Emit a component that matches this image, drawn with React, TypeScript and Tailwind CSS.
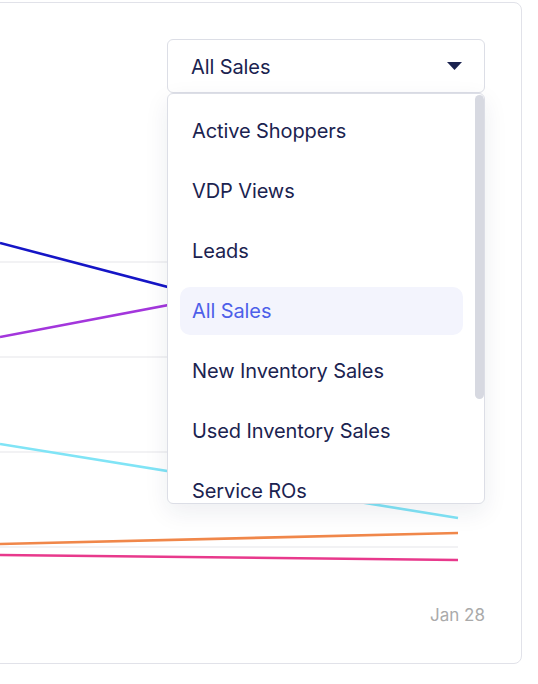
import React from 'react';

const options = [
  'Active Shoppers',
  'VDP Views',
  'Leads',
  'All Sales',
  'New Inventory Sales',
  'Used Inventory Sales',
  'Service ROs',
  'Parts Sales',
];

const series = [
  { color: '#1515c6', y1: 243, y2: 363 },
  { color: '#a336dc', y1: 337, y2: 250 },
  { color: '#80e4f6', y1: 444, y2: 518 },
  { color: '#f0874a', y1: 544, y2: 533 },
  { color: '#e8398c', y1: 555, y2: 560 },
];

const gridY = [262, 357, 452, 547];

export default function App() {
  const selected = 'All Sales';
  return (
    <div className="w-[538px] h-[684px] bg-white overflow-hidden pt-[2px]" style={{ fontFamily: 'Inter, "Noto Sans", sans-serif' }}>
      <div className="relative ml-[-10px] w-[532px] h-[662px] border border-[#e1e2e9] rounded-lg flex flex-col">
        <div className="flex justify-end pt-[36px] pr-[36px]">
          <button className="w-[318px] h-[54px] border border-[#dcdee6] rounded-md flex items-center justify-between pl-[23px] pr-[22px] bg-white">
            <span className="text-[20px] text-[#1b2350] tracking-[-0.1px] translate-y-[1px]">{selected}</span>
            <svg width="15" height="8" viewBox="0 0 15 8">
              <path d="M0 0 L15 0 L7.5 8 Z" fill="#1b2350" />
            </svg>
          </button>
        </div>

        <svg className="ml-[9px] block" width="460" height="490" viewBox="0 93 460 490">
          {gridY.map((y) => (
            <line key={y} x1="0" x2="458" y1={y} y2={y} stroke="#e6e6ea" strokeWidth="1.2" />
          ))}
          {series.map((s) => (
            <line key={s.color} x1="0" x2="458" y1={s.y1} y2={s.y2} stroke={s.color} strokeWidth="2.6" />
          ))}
        </svg>

        <div className="flex justify-end pr-[36px] mt-[20px]">
          <span className="text-[17px] leading-6 text-[#aaaaaa]">Jan 28</span>
        </div>

        <div className="absolute left-[176px] top-[90px] w-[318px] h-[411px] bg-white border border-[#dcdee6] rounded-md shadow-[0_8px_24px_rgba(30,35,80,0.08)] overflow-hidden">
          <div className="flex flex-col gap-3 pt-[13px] pl-3 pr-[21px]">
            {options.map((o) => (
              <div
                key={o}
                className={`h-[48px] shrink-0 flex items-center px-3 rounded-[10px] text-[20px] tracking-[-0.1px] ${
                  o === selected ? 'bg-[#f3f4fd] text-[#4d5fe9]' : 'text-[#1b2350]'
                }`}
              >
                {o}
              </div>
            ))}
          </div>
          <div className="absolute right-0 top-[1px] w-[9px] h-[304px] bg-[#d7d9e1] rounded-full" />
        </div>
      </div>
    </div>
  );
}
